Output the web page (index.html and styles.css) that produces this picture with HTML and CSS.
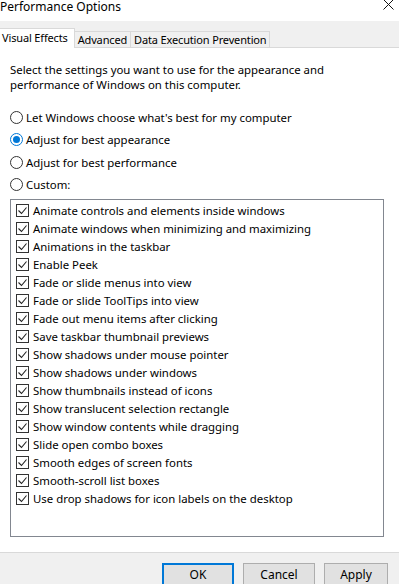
FILE: index.html
```html
<!DOCTYPE html>
<html lang="en">
<head>
    <meta charset="UTF-8">
    <title>Performance Options</title>
    <link rel="stylesheet" href="styles.css">
</head>
<body>
    <div class="titlebar">
        <span class="title">Performance Options</span>
        <svg class="close" width="11" height="11" viewBox="0 0 11 11"><path d="M0.5 0.5 L10.5 10.5 M10.5 0.5 L0.5 10.5" stroke="#111" stroke-width="1"/></svg>
    </div>
    <div class="tabs">
        <div class="tab active">Visual Effects</div>
        <div class="tab">Advanced</div>
        <div class="tab">Data Execution Prevention</div>
    </div>
    <div class="panel">
        <p class="intro">Select the settings you want to use for the appearance and<br>performance of Windows on this computer.</p>
        <div class="radios">
            <div class="radio"><span class="dot"></span>Let Windows choose what's best for my computer</div>
            <div class="radio"><span class="dot on"></span>Adjust for best appearance</div>
            <div class="radio"><span class="dot"></span>Adjust for best performance</div>
            <div class="radio"><span class="dot"></span>Custom:</div>
        </div>
        <div class="list">
            <div class="item"><span class="box"></span>Animate controls and elements inside windows</div>
            <div class="item"><span class="box"></span>Animate windows when minimizing and maximizing</div>
            <div class="item"><span class="box"></span>Animations in the taskbar</div>
            <div class="item"><span class="box"></span>Enable Peek</div>
            <div class="item"><span class="box"></span>Fade or slide menus into view</div>
            <div class="item"><span class="box"></span>Fade or slide ToolTips into view</div>
            <div class="item"><span class="box"></span>Fade out menu items after clicking</div>
            <div class="item"><span class="box"></span>Save taskbar thumbnail previews</div>
            <div class="item"><span class="box"></span>Show shadows under mouse pointer</div>
            <div class="item"><span class="box"></span>Show shadows under windows</div>
            <div class="item"><span class="box"></span>Show thumbnails instead of icons</div>
            <div class="item"><span class="box"></span>Show translucent selection rectangle</div>
            <div class="item"><span class="box"></span>Show window contents while dragging</div>
            <div class="item"><span class="box"></span>Slide open combo boxes</div>
            <div class="item"><span class="box"></span>Smooth edges of screen fonts</div>
            <div class="item"><span class="box"></span>Smooth-scroll list boxes</div>
            <div class="item"><span class="box"></span>Use drop shadows for icon labels on the desktop</div>
        </div>
    </div>
    <div class="buttons">
        <button class="btn default">OK</button>
        <button class="btn">Cancel</button>
        <button class="btn">Apply</button>
    </div>
</body>
</html>
```

FILE: styles.css
```css
body {
    margin: 0;
    width: 399px;
    height: 584px;
    overflow: hidden;
    background: #f0f0f0;
    font-family: "Noto Sans", "Open Sans", sans-serif;
    font-size: 11.4px;
    color: #000;
}
.titlebar {
    height: 21px;
    background: #fff;
    display: flex;
    justify-content: space-between;
    align-items: flex-start;
}
.title {
    font-size: 12px;
    line-height: 14px;
}
.close {
    margin-right: 5px;
    margin-top: -1px;
}
.tabs {
    height: 26px;
    display: flex;
    align-items: flex-end;
    font-size: 11px;
    letter-spacing: -0.15px;
}
.tab {
    height: 15px;
    line-height: 15px;
    padding: 0 3px;
    border: 1px solid #d9d9d9;
    border-bottom: none;
    margin-left: -1px;
    background: #f0f0f0;
}
.tab.active {
    height: 19px;
    line-height: 17px;
    margin-bottom: -1px;
    background: #fff;
    position: relative;
    z-index: 1;
    padding: 0 6px 0 2px;
}
.panel {
    margin-left: -1px;
    width: 396px;
    height: 504px;
    background: #fff;
    border: 1px solid #d9d9d9;
    padding: 0 0 0 10px;
}
.intro {
    margin: 14px 0 0;
    line-height: 15px;
}
.radios {
    margin-top: 14px;
}
.radio {
    height: 22.5px;
    display: flex;
    align-items: center;
}
.dot {
    width: 11px;
    height: 11px;
    border: 1px solid #333;
    border-radius: 50%;
    margin-right: 3px;
    box-sizing: content-box;
    position: relative;
}
.dot.on {
    border-color: #0078d7;
}
.dot.on::after {
    content: "";
    position: absolute;
    left: 2px;
    top: 2px;
    width: 7px;
    height: 7px;
    border-radius: 50%;
    background: #0078d7;
}
.list {
    margin-top: 3px;
    width: 374px;
    height: 338px;
    border: 1px solid #828790;
    padding: 1px 0 0 5px;
    box-sizing: border-box;
}
.item {
    height: 18px;
    display: flex;
    align-items: center;
}
.box {
    width: 11px;
    height: 11px;
    border: 1px solid #333;
    margin-right: 4px;
    background: url("data:image/svg+xml;utf8,<svg xmlns='http://www.w3.org/2000/svg' width='11' height='11'><path d='M1.5 5.5 L4.5 8.5 L9.5 2.5' fill='none' stroke='%23222' stroke-width='1.1'/></svg>") no-repeat center;
}
.buttons {
    display: flex;
    justify-content: flex-end;
    gap: 9px;
    padding: 10px 11px 0 0;
}
.btn {
    width: 72px;
    height: 23px;
    background: #e1e1e1;
    border: 1px solid #adadad;
    font-family: inherit;
    font-size: 12px;
    padding: 0;
}
.btn.default {
    border: 2px solid #0078d7;
}
.btn:last-child {
    width: 64px;
}
```
